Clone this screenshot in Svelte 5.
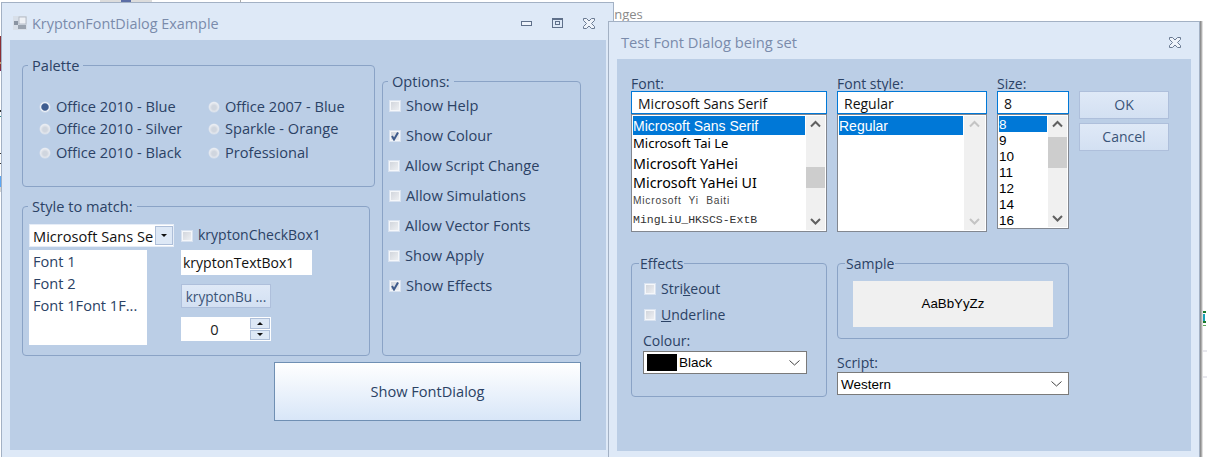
<script lang="ts">
    const palettes = [
        { label: "Office 2010 - Blue", selected: true },
        { label: "Office 2007 - Blue" },
        { label: "Office 2010 - Silver" },
        { label: "Sparkle - Orange" },
        { label: "Office 2010 - Black" },
        { label: "Professional" }
    ]

    const options = [
        { label: "Show Help" },
        { label: "Show Colour", checked: true },
        { label: "Allow Script Change", nudge: true },
        { label: "Allow Simulations" },
        { label: "Allow Vector Fonts", nudge: true },
        { label: "Show Apply", nudge: true },
        { label: "Show Effects", checked: true }
    ]

    const fontRows = [
        { label: "Microsoft Sans Serif", cls: "f-sans", h: 19, lh: 20, selected: true },
        { label: "Microsoft Tai Le", cls: "f-tai", h: 17, lh: 17 },
        { label: "Microsoft YaHei", cls: "f-yahei", h: 21, lh: 24 },
        { label: "Microsoft YaHei UI", cls: "f-yahei", h: 19, lh: 19 },
        { label: "Microsoft  Yi  Baiti", cls: "f-yi", h: 18, lh: 18 },
        { label: "MingLiU_HKSCS-ExtB", cls: "f-ming", h: 19, lh: 19 }
    ]

    const sizes = ["8", "9", "10", "11", "12", "14", "16"]

    // bits of the editor behind the two dialogs
    const behind = [
        { x: 0, y: 36, w: 1, h: 34, c: "#8c2f35" },
        { x: 0, y: 62, w: 1, h: 2, c: "#c79a6a" },
        { x: 0, y: 69, w: 1, h: 2, c: "#7a2a55" },
        { x: 0, y: 110, w: 1, h: 2, c: "#333" },
        { x: 0, y: 116, w: 1, h: 1, c: "#2a8a8a" },
        { x: 0, y: 153, w: 1, h: 1, c: "#333" },
        { x: 0, y: 163, w: 1, h: 1, c: "#333" },
        { x: 0, y: 176, w: 1, h: 11, c: "#5ba7f5" },
        { x: 0, y: 187, w: 1, h: 5, c: "#d4d4d4" },
        { x: 100, y: 0, w: 52, h: 2, c: "#dcdcdc" },
        { x: 121, y: 0, w: 10, h: 2, c: "#5b6ea6" },
        { x: 240, y: 0, w: 1, h: 2, c: "#aaa" },
        { x: 1201, y: 350, w: 6, h: 2, c: "#e8e8ee" },
        { x: 1201, y: 376, w: 6, h: 2, c: "#e8e8ee" },
        { x: 1203, y: 311, w: 3, h: 2, c: "#1c7a2c" },
        { x: 1203, y: 314, w: 2, h: 7, c: "#18a0b8" },
        { x: 1203, y: 321, w: 3, h: 2, c: "#1c7a2c" },
        { x: 1203, y: 325, w: 3, h: 1, c: "#5aa85a" }
    ]
</script>

{#snippet check(checked = false)}
    <span class="checkbox">
        {#if checked}
            <svg width="10" height="10" viewBox="0 0 10 10"><path d="M2 5 L4 8.5 L8 1.5" fill="none" stroke="#3f5b8c" stroke-width="2" /></svg>
        {/if}
    </span>
{/snippet}

{#snippet scrollbar(thumbTop: number, thumbHeight: number, off = false)}
    <div class="scrollbar" class:off>
        <svg class="arrow" width="19" height="17" viewBox="0 0 19 17"><path d="M5 10.5 L9.5 6 L14 10.5" fill="none" stroke="currentColor" stroke-width="2" /></svg>
        <div class="track">
            {#if thumbHeight}
                <div class="thumb" style="margin-top: {thumbTop}px; height: {thumbHeight}px"></div>
            {/if}
        </div>
        <svg class="arrow" width="19" height="17" viewBox="0 0 19 17"><path d="M5 6 L9.5 10.5 L14 6" fill="none" stroke="currentColor" stroke-width="2" /></svg>
    </div>
{/snippet}

{#snippet chevron()}
    <svg class="chevron" width="11" height="6" viewBox="0 0 11 6"><path d="M0.5 0.5 L5.5 5 L10.5 0.5" fill="none" stroke="#444" /></svg>
{/snippet}

{#snippet closeIcon()}
    <svg width="12" height="11" viewBox="0 0 12 11"><path d="M0.5 0.5 H3.5 L6 3 L8.5 0.5 H11.5 V2.5 L8.5 5.5 L11.5 8.5 V10.5 H8.5 L6 8 L3.5 10.5 H0.5 V8.5 L3.5 5.5 L0.5 2.5 Z" fill="#eef3fa" stroke="#6a7a92" /></svg>
{/snippet}

<div class="desktop">
    {#each behind as b}
        <span class="speck" style="left: {b.x}px; top: {b.y}px; width: {b.w}px; height: {b.h}px; background: {b.c}"></span>
    {/each}
    <span class="behind-text">anges</span>

    <section class="window left-window">
        <header class="titlebar">
            <svg class="app-icon" width="14" height="14" viewBox="0 0 14 14">
                <rect width="14" height="14" fill="#d8dfe8" />
                <rect x="6" y="1" width="7" height="7" fill="#eef1f5" stroke="#aab2bd" stroke-width="0.8" />
                <rect x="1" y="5" width="4" height="4" fill="#8a94a2" />
                <rect x="5" y="9" width="8" height="4" fill="#9aa3af" />
            </svg>
            <span class="title">KryptonFontDialog Example</span>
            <div class="controls">
                <svg width="11" height="5" viewBox="0 0 11 5"><rect x="0.5" y="0.5" width="10" height="4" fill="#eef3fa" stroke="#5f708a" /></svg>
                <svg width="11" height="10" viewBox="0 0 11 10"><rect x="0.5" y="0.5" width="10" height="9" fill="none" stroke="#5f708a" /><rect x="0" y="0" width="11" height="2" fill="#5f708a" /><rect x="3.5" y="3.5" width="4" height="3" fill="none" stroke="#5f708a" /></svg>
                {@render closeIcon()}
            </div>
        </header>

        <div class="client left-client">
            <div class="left-top">
                <div class="left-col">
                    <div class="group palette">
                        <span class="legend">Palette</span>
                        <div class="radios">
                            {#each palettes as p}
                                <label class="radio-row">
                                    <span class="radio" class:selected={p.selected}></span>
                                    {p.label}
                                </label>
                            {/each}
                        </div>
                    </div>

                    <div class="group style-match">
                        <span class="legend">Style to match:</span>
                        <div class="style-grid">
                            <div class="k-combo">
                                <span class="k-combo-text">Microsoft Sans Se</span>
                                <span class="k-drop"><i class="tri-down"></i></span>
                            </div>
                            <label class="check-row small-gap">
                                {@render check()}
                                kryptonCheckBox1
                            </label>
                            <ul class="k-list">
                                <li>Font 1</li>
                                <li>Font 2</li>
                                <li>Font 1Font 1F...</li>
                            </ul>
                            <div class="stack">
                                <div class="k-text">kryptonTextBox1</div>
                                <button class="k-button">kryptonBu ...</button>
                                <div class="k-num">
                                    <span class="k-num-value">0</span>
                                    <span class="spin">
                                        <span class="spin-btn"><i class="tri-up"></i></span>
                                        <span class="spin-btn"><i class="tri-down"></i></span>
                                    </span>
                                </div>
                            </div>
                        </div>
                    </div>
                </div>

                <div class="group options">
                    <span class="legend">Options:</span>
                    {#each options as o}
                        <label class="check-row option" class:nudge={o.nudge}>
                            {@render check(o.checked)}
                            {o.label}
                        </label>
                    {/each}
                </div>
            </div>

            <button class="show-button">Show FontDialog</button>
        </div>
    </section>

    <section class="window right-window">
        <header class="titlebar">
            <span class="title">Test Font Dialog being set</span>
            <div class="controls">
                {@render closeIcon()}
            </div>
        </header>

        <div class="client right-client">
            <div class="pick-grid">
                <div class="col">
                    <span class="cap">Font:</span>
                    <div class="pick-input">Microsoft Sans Serif</div>
                    <div class="listbox">
                        <div class="rows">
                            {#each fontRows as r}
                                <div class="row {r.cls}" class:selected={r.selected} style="height: {r.h}px; line-height: {r.lh}px">{r.label}</div>
                            {/each}
                        </div>
                        {@render scrollbar(34, 21)}
                    </div>
                </div>

                <div class="col">
                    <span class="cap">Font style:</span>
                    <div class="pick-input">Regular</div>
                    <div class="listbox">
                        <div class="rows">
                            <div class="row f-sans selected style-row">Regular</div>
                        </div>
                        {@render scrollbar(0, 0, true)}
                    </div>
                </div>

                <div class="col">
                    <span class="cap">Size:</span>
                    <div class="pick-input">8</div>
                    <div class="listbox size-list">
                        <div class="rows">
                            {#each sizes as s, i}
                                <div class="row size-row" class:selected={i === 0}>{s}</div>
                            {/each}
                        </div>
                        {@render scrollbar(4, 31)}
                    </div>
                </div>

                <div class="col dialog-buttons">
                    <button class="k-button big">OK</button>
                    <button class="k-button big">Cancel</button>
                </div>
            </div>

            <div class="lower">
                <div class="group effects">
                    <span class="legend tight">Effects</span>
                    <label class="check-row fx"><span class="fx-box">{@render check()}</span><span>Stri<u>k</u>eout</span></label>
                    <label class="check-row fx"><span class="fx-box">{@render check()}</span><span><u>U</u>nderline</span></label>
                    <span class="cap colour-cap">Colour:</span>
                    <div class="win-select">
                        <span class="swatch"></span>
                        <span>Black</span>
                        {@render chevron()}
                    </div>
                </div>

                <div class="sample-col">
                    <div class="group sample">
                        <span class="legend tight">Sample</span>
                        <div class="sample-box">AaBbYyZz</div>
                    </div>
                    <span class="cap script-cap">Script:</span>
                    <div class="win-select">
                        <span class="script-name">Western</span>
                        {@render chevron()}
                    </div>
                </div>
            </div>
        </div>
    </section>
</div>

<style>
    :global(body) {
        margin: 0;
        background: #fff;
    }

    .desktop {
        position: relative;
        width: 1207px;
        height: 457px;
        overflow: hidden;
        font-family: "Open Sans", "Noto Sans", sans-serif;
        font-size: 14px;
        color: #2b4265;
    }

    .speck {
        position: absolute;
    }

    .behind-text {
        position: absolute;
        left: 607px;
        top: 5px;
        font-size: 13px;
        color: #8a8a8a;
    }

    .window {
        position: absolute;
        box-sizing: border-box;
        display: flex;
        flex-direction: column;
        background: #dee9f7;
        border: 1px solid #a3b1c4;
    }

    .left-window {
        left: 1px;
        top: 2px;
        width: 613px;
        height: 470px;
        font-size: 14.6px;
    }

    .right-window {
        left: 608px;
        top: 21px;
        width: 592px;
        height: 450px;
        box-shadow: 1px 0 0 #8f8f8f, 2px 0 0 #b0b0b0, 3px 0 0 #e0e0e0;
    }

    .titlebar {
        display: flex;
        align-items: center;
        flex: none;
        height: 37px;
        box-sizing: border-box;
    }

    .left-window .titlebar {
        padding: 3px 18px 0 11px;
    }

    .right-window .titlebar {
        padding: 3px 18px 0 12px;
    }

    .app-icon {
        margin-right: 5px;
    }

    .title {
        font-size: 14.7px;
        color: #7a8bab;
    }

    .left-window .title {
        font-size: 14.4px;
    }

    .controls {
        margin-left: auto;
        display: flex;
        align-items: center;
        gap: 20px;
    }

    .client {
        background: #bbcee6;
        box-sizing: border-box;
    }

    .left-client {
        height: 410px;
        margin: 0 7px 0 8px;
        padding: 25px 0 0 12px;
    }

    .right-client {
        height: 392px;
        margin: 0 8px 0 8px;
        padding: 17px 0 0 14px;
    }

    .left-top {
        display: flex;
        gap: 7px;
    }

    .left-col {
        display: flex;
        flex-direction: column;
        gap: 19px;
        width: 353px;
    }

    .group {
        position: relative;
        box-sizing: border-box;
        border: 1px solid #8aa3c6;
        border-radius: 4px;
    }

    .legend {
        position: absolute;
        left: 5px;
        top: -11px;
        padding: 0 4px;
        line-height: 20px;
        background: #bbcee6;
        white-space: nowrap;
    }

    .legend.tight {
        left: 7px;
        top: -10px;
        padding: 0 1px;
    }

    .palette {
        height: 122px;
        padding: 29px 0 0 17px;
    }

    .radios {
        display: grid;
        grid-template-columns: 169px 150px;
        grid-template-rows: 22px 24px 22px;
        align-items: start;
    }

    .radio-row {
        display: flex;
        align-items: center;
        gap: 6px;
        height: 22px;
    }

    .radio {
        width: 10px;
        height: 10px;
        margin-top: 2px;
        border-radius: 50%;
        background: radial-gradient(circle at 50% 55%, #d0d6df 0 30%, #f6f7fa 80%);
        box-shadow: 0 0 0 0.5px #d8e0ec;
    }

    .radio.selected {
        background: radial-gradient(circle, #3f5d90 0 45%, #eef2f8 60%);
    }

    .style-match {
        width: 348px;
        height: 150px;
        padding: 17px 0 0 6px;
    }

    .style-grid {
        display: grid;
        grid-template-columns: 152px 1fr;
        grid-template-rows: 23px auto;
        row-gap: 3px;
    }

    .k-combo {
        display: flex;
        box-sizing: border-box;
        width: 145px;
        height: 23px;
        background: #fff;
        border: 1px solid #e6edf7;
        color: #111;
    }

    .k-combo-text {
        flex: 1;
        padding-left: 3px;
        line-height: 22px;
        white-space: nowrap;
    }

    .k-drop {
        flex: none;
        display: flex;
        align-items: center;
        justify-content: center;
        box-sizing: border-box;
        width: 18px;
        margin: 1px 0 1px 1px;
        background: #dde8f6;
        border: 1px solid #aebfd9;
    }

    i.tri-down, i.tri-up {
        display: block;
        width: 0;
        height: 0;
        border-left: 3px solid transparent;
        border-right: 3px solid transparent;
    }

    i.tri-down {
        border-top: 3px solid #111;
    }

    i.tri-up {
        border-bottom: 3px solid #111;
    }

    .checkbox {
        flex: none;
        display: flex;
        align-items: center;
        justify-content: center;
        box-sizing: border-box;
        width: 12px;
        height: 12px;
        margin-top: 2px;
        background: linear-gradient(135deg, #cfd3da, #f0f2f5);
        border: 1px solid #d8e2f0;
        box-shadow: inset 0 0 0 1px #f5f7fa;
    }

    .check-row {
        display: flex;
        align-items: center;
        gap: 5px;
    }

    .small-gap {
        height: 21px;
        font-size: 14px;
    }

    .k-list {
        margin: 0;
        padding: 1px 0 0 4px;
        list-style: none;
        box-sizing: border-box;
        width: 118px;
        height: 95px;
        background: #fff;
    }

    .k-list li {
        height: 22px;
        line-height: 21px;
        white-space: nowrap;
    }

    .stack {
        display: flex;
        flex-direction: column;
    }

    .k-text {
        box-sizing: border-box;
        width: 131px;
        height: 25px;
        padding-left: 2px;
        line-height: 25px;
        font-size: 14px;
        background: #fff;
        color: #111;
    }

    .k-button {
        box-sizing: border-box;
        padding: 0 0 2px;
        font: inherit;
        color: #3a5478;
        background: linear-gradient(#dfe9f7, #d3e0f2);
        border: 1px solid #aebfdb;
    }

    .stack .k-button {
        width: 90px;
        height: 24px;
        margin-top: 9px;
        padding: 0;
        font-size: 13.6px;
    }

    .k-num {
        display: flex;
        width: 90px;
        height: 24px;
        margin-top: 9px;
        background: #fff;
        box-sizing: border-box;
        color: #222;
    }

    .k-num-value {
        flex: 1;
        padding-right: 2px;
        line-height: 24px;
        text-align: center;
    }

    .spin {
        display: flex;
        flex-direction: column;
        gap: 1px;
        width: 20px;
        padding: 1px 1px 1px 0;
    }

    .spin-btn {
        flex: 1;
        display: flex;
        align-items: center;
        justify-content: center;
        background: #dde8f6;
        border: 1px solid #aebfd9;
        box-sizing: border-box;
    }

    .options {
        width: 199px;
        height: 275px;
        margin-top: 16px;
        padding: 8px 0 0 6px;
    }

    .option {
        height: 30px;
    }

    .option.nudge {
        margin-left: -1px;
    }

    .show-button {
        display: block;
        width: 307px;
        height: 59px;
        margin: 6px 0 0 252px;
        padding: 0 0 2px;
        font: inherit;
        color: #2b4265;
        background: linear-gradient(#fff, #d8e6f8);
        border: 1px solid #6f8fb3;
    }

    .pick-grid {
        display: grid;
        grid-template-columns: 196px 150px 72px 90px;
        column-gap: 10px;
    }

    .col {
        display: flex;
        flex-direction: column;
    }

    .cap {
        display: block;
        height: 15px;
        line-height: 15px;
    }

    .pick-input {
        box-sizing: border-box;
        height: 23px;
        padding-left: 6px;
        line-height: 24px;
        background: #fff;
        border: 1px solid #0078d7;
        color: #111;
        font-size: 14px;
        overflow: hidden;
    }

    .listbox {
        display: flex;
        box-sizing: border-box;
        height: 118px;
        padding: 1px;
        background: #fff;
        border: 1px solid #828790;
        color: #000;
    }

    .size-list {
        height: 115px;
    }

    .rows {
        flex: 1;
        min-width: 0;
        overflow: hidden;
    }

    .row {
        white-space: pre;
        overflow: hidden;
    }

    .row.selected {
        background: #0078d7;
        color: #fff;
    }

    .f-sans {
        font-family: "Liberation Sans", sans-serif;
        font-size: 14px;
    }

    .style-row {
        height: 19px;
        line-height: 20px;
    }

    .f-tai {
        font-family: "Noto Sans", sans-serif;
        font-size: 13px;
    }

    .f-yahei {
        font-family: "Noto Sans", sans-serif;
        font-size: 14.3px;
    }

    .f-yi {
        font-family: "Liberation Sans", sans-serif;
        font-size: 10.2px;
        letter-spacing: 0.8px;
        color: #444;
    }

    .f-ming {
        font-family: "Liberation Mono", monospace;
        font-size: 11.5px;
        color: #333;
    }

    .size-row {
        height: 16px;
        line-height: 17px;
        font-family: "Liberation Sans", sans-serif;
        font-size: 13.5px;
    }

    .scrollbar {
        flex: none;
        display: flex;
        flex-direction: column;
        width: 19px;
        margin-left: 1px;
        background: #f0f0f0;
        color: #606060;
    }

    .scrollbar.off {
        width: 21px;
        align-items: center;
        color: #c4c4c4;
    }

    .arrow {
        flex: none;
    }

    .track {
        flex: 1;
    }

    .thumb {
        background: #cdcdcd;
    }

    .dialog-buttons {
        padding-top: 15px;
        gap: 4px;
    }

    .k-button.big {
        height: 28px;
    }

    .lower {
        display: flex;
        gap: 10px;
        margin-top: 31px;
    }

    .effects {
        display: flex;
        flex-direction: column;
        align-items: stretch;
        width: 196px;
        height: 134px;
        padding: 11px 19px 0 11px;
    }

    .fx {
        height: 26px;
        gap: 5px;
    }

    .fx-box {
        display: flex;
        margin-left: 1px;
    }

    .colour-cap {
        margin: 6px 0 1px;
    }

    .win-select {
        display: flex;
        align-items: center;
        box-sizing: border-box;
        height: 23px;
        margin-top: 2px;
        background: #fff;
        border: 1px solid #7a7a7a;
        color: #000;
        font-family: "Liberation Sans", sans-serif;
        font-size: 13.5px;
    }

    .chevron {
        margin-left: auto;
        margin-right: 6px;
    }

    .swatch {
        width: 30px;
        height: 17px;
        margin: 0 2px 0 3px;
        background: #000;
    }

    .script-name {
        padding: 1px 0 0 3px;
    }

    .sample-col {
        width: 232px;
    }

    .sample {
        height: 76px;
        padding: 17px 0 0 15px;
    }

    .sample-box {
        width: 200px;
        height: 46px;
        line-height: 46px;
        text-align: center;
        background: #f0f0f0;
        color: #000;
        font-family: "Liberation Sans", sans-serif;
        font-size: 13.3px;
    }

    .script-cap {
        margin: 16px 0 1px;
    }
</style>
